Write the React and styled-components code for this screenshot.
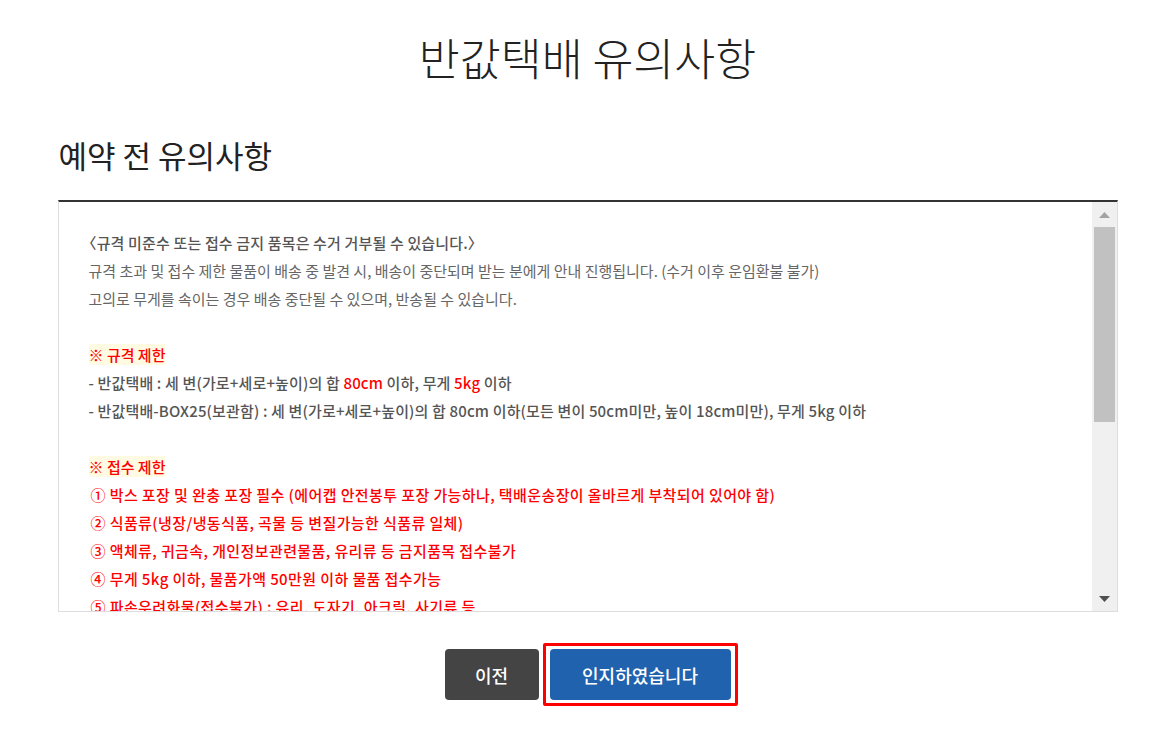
import React from 'react'
import styled, { createGlobalStyle } from 'styled-components'

const GlobalStyle = createGlobalStyle`
  html, body {
    margin: 0;
    padding: 0;
    background: #fff;
    font-family: 'Noto Sans CJK KR', 'Noto Sans', sans-serif;
  }
  body {
    padding-left: 4px;
  }
`

// ── page frame ──────────────────────────────────────────
const Page = styled.div`
  width: 1060px;
  margin: 0 auto;
  padding: 26px 0 29px;
  display: flex;
  flex-direction: column;
`

const Title = styled.h1`
  margin: 0;
  text-align: center;
  font-size: 44.5px;
  line-height: 62px;
  font-weight: 300;
  color: #222;
`

const SubTitle = styled.h2`
  margin: 45px 0 0;
  font-size: 31px;
  line-height: 44px;
  font-weight: 400;
  color: #222;
  padding-left: 1px;
`

// ── notice box ──────────────────────────────────────────
const NoticeBox = styled.div`
  margin-top: 23px;
  height: 409px;
  display: flex;
  border-top: 2px solid #333;
  border-left: 1px solid #ddd;
  border-right: 1px solid #ddd;
  border-bottom: 1px solid #ddd;
`

const NoticeBody = styled.div`
  flex: 1;
  overflow: hidden;
  padding: 27px 0 0 30px;
  font-size: 15px;
  line-height: 28px;
  color: #666;
`

const Line = styled.p`
  margin: 0;
  white-space: nowrap;
  min-height: 28px;
  font-weight: ${p => (p.$bold ? 500 : 400)};
  color: ${p => (p.$red ? '#ff0000' : p.$bold ? '#555' : '#666')};
  letter-spacing: ${p => (p.$red ? '0.4px' : p.$bold ? '0.15px' : '0')};
  padding-left: ${p => (p.$indent ? '2px' : '0')};
`

const Bracket = styled.span`
  display: inline-block;
  margin-left: ${p => (p.$open ? '-7px' : '0')};
  margin-right: ${p => (p.$open ? '0' : '-7px')};
`

const Mark = styled.span`
  background: #fffbe3;
  color: #ff0000;
  font-weight: 500;
`

const Red = styled.span`
  color: #ff0000;
`

// fake scrollbar column
const ScrollBar = styled.div`
  width: 25px;
  background: #f0f0f0;
  display: flex;
  flex-direction: column;
  align-items: center;
`

const Arrow = styled.div`
  height: 25px;
  width: 100%;
  display: flex;
  align-items: center;
  justify-content: center;
`

const Track = styled.div`
  flex: 1;
  width: 100%;
  padding: 0 2px;
  box-sizing: border-box;
`

const Thumb = styled.div`
  height: 195px;
  background: #c1c1c1;
`

// ── buttons ─────────────────────────────────────────────
const ButtonRow = styled.div`
  margin-top: 37px;
  display: flex;
  justify-content: center;
  gap: 11px;
`

const Button = styled.button`
  position: relative;
  height: 51px;
  padding: 0;
  width: ${p => p.$width}px;
  border: none;
  border-radius: 4px;
  background: ${p => (p.$primary ? '#2162ae' : '#444')};
  color: #fff;
  font-family: inherit;
  font-size: 18px;
  font-weight: 500;
  cursor: pointer;
  overflow: visible;

  &::after {
    content: '';
    display: ${p => (p.$highlight ? 'block' : 'none')};
    position: absolute;
    inset: -6px -7px;
    border: 3px solid #ff0000;
    border-radius: 2px;
    pointer-events: none;
  }
`

const UpIcon = () => (
  <svg width="11" height="6" viewBox="0 0 11 6">
    <path d="M0 6 L5.5 0 L11 6 Z" fill="#a3a3a3" />
  </svg>
)

const DownIcon = () => (
  <svg width="11" height="6" viewBox="0 0 11 6">
    <path d="M0 0 L11 0 L5.5 6 Z" fill="#505050" />
  </svg>
)

export default function App() {
  return (
    <>
      <GlobalStyle />
      <Page>
        <Title>반값택배 유의사항</Title>
        <SubTitle>예약 전 유의사항</SubTitle>

        <NoticeBox>
          <NoticeBody>
            <Line $bold>
              <Bracket $open>〈</Bracket>규격 미준수 또는 접수 금지 품목은 수거 거부될 수 있습니다.<Bracket>〉</Bracket>
            </Line>
            <Line>규격 초과 및 접수 제한 물품이 배송 중 발견 시, 배송이 중단되며 받는 분에게 안내 진행됩니다. (수거 이후 운임환불 불가)</Line>
            <Line>고의로 무게를 속이는 경우 배송 중단될 수 있으며, 반송될 수 있습니다.</Line>
            <Line />
            <Line><Mark>※ 규격 제한</Mark></Line>
            <Line $bold>- 반값택배 : 세 변(가로+세로+높이)의 합 <Red>80cm</Red> 이하, 무게 <Red>5kg</Red> 이하</Line>
            <Line $bold>- 반값택배-BOX25(보관함) : 세 변(가로+세로+높이)의 합 80cm 이하(모든 변이 50cm미만, 높이 18cm미만), 무게 5kg 이하</Line>
            <Line />
            <Line><Mark>※ 접수 제한</Mark></Line>
            <Line $bold $red $indent>① 박스 포장 및 완충 포장 필수 (에어캡 안전봉투 포장 가능하나, 택배운송장이 올바르게 부착되어 있어야 함)</Line>
            <Line $bold $red $indent>② 식품류(냉장/냉동식품, 곡물 등 변질가능한 식품류 일체)</Line>
            <Line $bold $red $indent>③ 액체류, 귀금속, 개인정보관련물품, 유리류 등 금지품목 접수불가</Line>
            <Line $bold $red $indent>④ 무게 5kg 이하, 물품가액 50만원 이하 물품 접수가능</Line>
            <Line $bold $red $indent>⑤ 파손우려화물(접수불가) : 유리, 도자기, 아크릴, 사기류 등</Line>
          </NoticeBody>

          <ScrollBar>
            <Arrow><UpIcon /></Arrow>
            <Track><Thumb /></Track>
            <Arrow><DownIcon /></Arrow>
          </ScrollBar>
        </NoticeBox>

        <ButtonRow>
          <Button $width={94}>이전</Button>
          <Button $width={181} $primary $highlight>인지하였습니다</Button>
        </ButtonRow>
      </Page>
    </>
  )
}
